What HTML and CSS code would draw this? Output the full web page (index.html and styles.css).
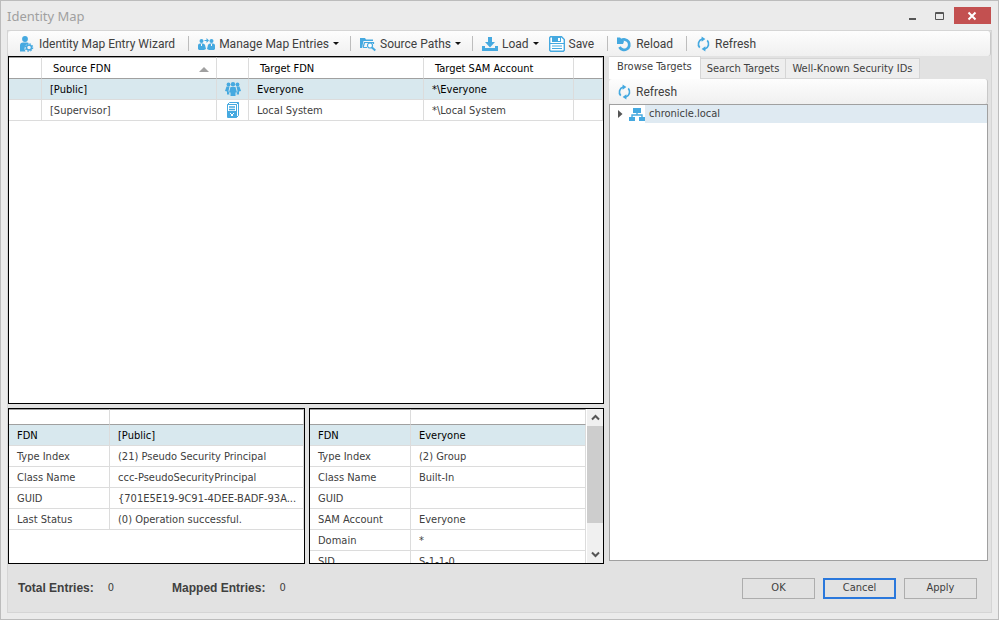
FILE: index.html
```html
<!DOCTYPE html>
<html lang="en">
<head>
  <meta charset="UTF-8">
  <meta name="viewport" content="width=device-width, initial-scale=1.0">
  <title>Identity Map</title>
  <link rel="stylesheet" href="styles.css">
</head>
<body>
  <!-- shared icons -->
  <svg class="defs" width="0" height="0">
    <symbol id="i-refresh" viewBox="0 0 16 16">
      <path d="M6.500 2.800A5.500 5.500 0 0 0 4 11.800M9.500 13.200A5.500 5.500 0 0 0 12 4.200" fill="none" stroke="#45a9e0" stroke-width="1.800"/>
      <path d="M6 0l4 2.700-4 3zM10 16l-4-2.700 4-3z" fill="#45a9e0"/>
    </symbol>
  </svg>

  <div class="window">
    <header class="titlebar">
      <h1>Identity Map</h1>
      <div class="window-buttons">
        <button class="win-btn" aria-label="Minimize"><svg width="10" height="10"><path d="M1 8h7" stroke="#555" stroke-width="2"/></svg></button>
        <button class="win-btn" aria-label="Maximize"><svg width="10" height="10"><path d="M.5 1.500h8v7h-8zM0 2.500h9" fill="none" stroke="#555"/></svg></button>
        <button class="win-btn close" aria-label="Close"><svg width="10" height="10"><path d="M1.500 1.500l7 7M8.500 1.500l-7 7" stroke="#fff" stroke-width="2"/></svg></button>
      </div>
    </header>

    <main class="client">
      <div class="toolbar">
        <button class="tool">
          <svg width="16" height="16" viewBox="0 0 16 16" fill="#45a9e0"><circle cx="6" cy="3" r="2.900"/><path d="M1 15.500V9.500Q1 6.500 4 6.500h4q1.500 0 2 1a5 5 0 0 0-3.500 8z"/><circle cx="10" cy="11.500" r="2.500" fill="none" stroke="#45a9e0" stroke-width="1.500"/><circle cx="10" cy="11.500" r="3.700" fill="none" stroke="#45a9e0" stroke-width="1.200" stroke-dasharray="1.500 1.400"/></svg>
          <span>Identity Map Entry Wizard</span>
        </button>
        <i class="sep"></i>
        <button class="tool">
          <svg width="17" height="16" viewBox="0 0 17 16" fill="#45a9e0"><circle cx="3.500" cy="5" r="2"/><circle cx="13.500" cy="5" r="2"/><path d="M0 13V9.500Q0 7.500 2 7.500h3q1.500 0 2 1.500l1 4-2 1H1zM17 13V9.500q0-2-2-2h-3q-1.500 0-2 1.500l-1 4 2 1h5z"/><path d="M6.500 4.500h3" stroke="#45a9e0"/><path d="M8.500 2L11 4.500 8.500 7z"/><path d="M3.500 8v2M13.500 8v2" stroke="#f7f7f7"/></svg>
          <span>Manage Map Entries</span><b class="caret"></b>
        </button>
        <i class="sep"></i>
        <button class="tool">
          <svg width="16" height="16" viewBox="0 0 16 16"><path d="M0 2h5l1 1.500h7V5H3.500L2 12H0z" fill="#45a9e0"/><path d="M3 11.500L4.500 6.500H13.500V8M3 11.500h4" fill="none" stroke="#45a9e0" stroke-width="1.200"/><circle cx="10" cy="9.500" r="2.500" fill="#fff" stroke="#45a9e0" stroke-width="1.200"/><path d="M12 11.500l3.300 3" stroke="#45a9e0" stroke-width="2"/></svg>
          <span>Source Paths</span><b class="caret"></b>
        </button>
        <i class="sep"></i>
        <button class="tool">
          <svg width="16" height="16" viewBox="0 0 16 16" fill="#45a9e0"><path d="M6 1h4v5h3l-5 5.500L3 6h3z"/><path d="M0 10h3v2h10v-2h3v5H0z"/></svg>
          <span>Load</span><b class="caret"></b>
        </button>
        <button class="tool save">
          <svg width="16" height="16" viewBox="0 0 16 16"><path d="M1.500.7H12.500l2.800 2.800v10.800l-1 1H1.700l-1-1V1.700z" fill="#fff" stroke="#45a9e0" stroke-width="1.400"/><path d="M3 1h9v5H3z" fill="#45a9e0"/><path d="M9 2h2v3H9z" fill="#fff"/><path d="M1 7.500h14M3 10h10M3 12.500h10" stroke="#45a9e0" stroke-width="1.200"/></svg>
          <span>Save</span>
        </button>
        <i class="sep"></i>
        <button class="tool">
          <svg width="15" height="16" viewBox="0 0 15 16"><path d="M4 4.500A5.200 5.200 0 1 1 2.500 11" fill="none" stroke="#45a9e0" stroke-width="2.800"/><path d="M0 1.500h3l4 4L6 8H0z" fill="#45a9e0"/></svg>
          <span>Reload</span>
        </button>
        <i class="sep"></i>
        <button class="tool">
          <svg width="15" height="16"><use href="#i-refresh"/></svg>
          <span>Refresh</span>
        </button>
      </div>

      <div class="panes">
        <section class="left">
          <div class="box entries">
            <table>
              <colgroup><col class="c-mark"><col class="c-name"><col class="c-icon"><col class="c-name"><col class="c-sam"><col></colgroup>
              <thead>
                <tr><th></th><th><div class="sorted">Source FDN<i class="sort"></i></div></th><th></th><th>Target FDN</th><th>Target SAM Account</th><th></th></tr>
              </thead>
              <tbody>
                <tr class="selected">
                  <td></td><td>[Public]</td>
                  <td class="icon"><svg width="16" height="14" viewBox="0 0 16 14" fill="#45a9e0"><circle cx="3.500" cy="2.500" r="1.900"/><circle cx="12.500" cy="2.500" r="1.900"/><circle cx="8" cy="2.200" r="2.200"/><path d="M1.500 4.500h3L3.500 9l1 3.500H2V9.500L0 9zM14.500 4.500h-3l1 4.500-1 3.500H14V9.500l2-.500zM5.500 5h5l1.500 5.500h-1.500V14h-5v-3.500H4z"/></svg></td>
                  <td>Everyone</td><td>*\Everyone</td><td></td>
                </tr>
                <tr>
                  <td></td><td>[Supervisor]</td>
                  <td class="icon"><svg width="12" height="16" viewBox="0 0 12 16"><path d="M.5 2.500L2.500.5h9v13l-2 2h-9z" fill="#fff" stroke="#45a9e0"/><path d="M9.500 2.500v13M.5 2.500h9l2-2" fill="none" stroke="#45a9e0"/><path d="M2 5h6M2 7.500h6" stroke="#45a9e0" stroke-width="1.400"/><path d="M1 9h8.500v6.500H1z" fill="#45a9e0"/><path d="M3 11h1v1H3zM6 11h1v1H6zM4 12h2v2H4z" fill="#fff"/></svg></td>
                  <td>Local System</td><td>*\Local System</td><td></td>
                </tr>
              </tbody>
            </table>
          </div>

          <div class="details">
            <div class="box">
              <table class="props">
                <colgroup><col class="c-key"><col></colgroup>
                <thead><tr><th></th><th></th></tr></thead>
                <tbody>
                  <tr class="selected"><td>FDN</td><td>[Public]</td></tr>
                  <tr><td>Type Index</td><td>(21) Pseudo Security Principal</td></tr>
                  <tr><td>Class Name</td><td>ccc-PseudoSecurityPrincipal</td></tr>
                  <tr><td>GUID</td><td>{701E5E19-9C91-4DEE-BADF-93A...</td></tr>
                  <tr><td>Last Status</td><td>(0) Operation successful.</td></tr>
                </tbody>
              </table>
            </div>
            <div class="box scrolled">
              <table class="props">
                <colgroup><col class="c-key"><col></colgroup>
                <thead><tr><th></th><th></th></tr></thead>
                <tbody>
                  <tr class="selected"><td>FDN</td><td>Everyone</td></tr>
                  <tr><td>Type Index</td><td>(2) Group</td></tr>
                  <tr><td>Class Name</td><td>Built-In</td></tr>
                  <tr><td>GUID</td><td></td></tr>
                  <tr><td>SAM Account</td><td>Everyone</td></tr>
                  <tr><td>Domain</td><td>*</td></tr>
                  <tr><td>SID</td><td>S-1-1-0</td></tr>
                </tbody>
              </table>
              <div class="scrollbar">
                <button aria-label="Scroll up"><svg width="9" height="7"><path d="M1 5.500L4.500 2 8 5.500" fill="none" stroke="#555" stroke-width="2"/></svg></button>
                <div class="track"><div class="thumb"></div></div>
                <button aria-label="Scroll down"><svg width="9" height="7"><path d="M1 1.500L4.500 5 8 1.500" fill="none" stroke="#555" stroke-width="2"/></svg></button>
              </div>
            </div>
          </div>
        </section>

        <section class="right">
          <div class="tabs" role="tablist">
            <button class="tab active" role="tab" aria-selected="true">Browse Targets</button>
            <button class="tab" role="tab">Search Targets</button>
            <button class="tab" role="tab">Well-Known Security IDs</button>
          </div>
          <div class="toolbar small">
            <button class="tool">
              <svg width="15" height="16"><use href="#i-refresh"/></svg>
              <span>Refresh</span>
            </button>
          </div>
          <div class="tree">
            <div class="node">
              <svg class="expander" width="5" height="8"><path d="M0 0l4.500 4L0 8z" fill="#555"/></svg>
              <svg width="16" height="13" viewBox="0 0 16 13"><path d="M4 0h8v5H4zM0 9h6v4H0zM10 9h6v4h-6z" fill="#45a9e0"/><path d="M8 5v2M3 9V7h10v2" fill="none" stroke="#45a9e0" stroke-width="1.400"/></svg>
              <span>chronicle.local</span>
            </div>
          </div>
        </section>
      </div>

      <footer class="status">
        <div class="count"><b>Total Entries:</b><span>0</span></div>
        <div class="count"><b>Mapped Entries:</b><span>0</span></div>
        <div class="actions">
          <button class="btn">OK</button>
          <button class="btn default">Cancel</button>
          <button class="btn">Apply</button>
        </div>
      </footer>
    </main>
  </div>
</body>
</html>
```
FILE: styles.css
```css
* {
  box-sizing: border-box;
  margin: 0;
  padding: 0;
}

body {
  height: 100vh;
  padding: 0 3px 2px 0;
  background: #fff;
  color: #404040;
  font: 11px/14px "DejaVu Sans Condensed", "DejaVu Sans", sans-serif;
}

button {
  border: none;
  background: none;
  color: inherit;
  font: inherit;
}

svg {
  display: block;
  flex: none;
}

.defs {
  position: absolute;
}

.window {
  height: 100%;
  display: flex;
  flex-direction: column;
  padding: 0 6px 6px;
  background: #ebebeb;
  border: 1px solid #bcbcbc;
}

/* title bar */
.titlebar {
  display: flex;
  justify-content: space-between;
  height: 29px;
  flex: none;
}

.titlebar h1 {
  font: 13px/30px "Noto Sans", sans-serif;
  color: #a0a0a0;
}

.window-buttons {
  display: flex;
  height: 17px;
  margin: 6px 1px 0 0;
}

.win-btn {
  width: 27px;
  padding-right: 2px;
  display: flex;
  align-items: center;
  justify-content: center;
}

.win-btn.close {
  width: 37px;
  background: #c35050;
}

/* toolbar */
.client {
  flex: 1;
  min-height: 0;
  display: flex;
  flex-direction: column;
  background: #e2e2e2;
  border: 1px solid #d5d5d5;
}

.toolbar {
  display: flex;
  align-items: center;
  flex: none;
  height: 25px;
  padding-left: 11px;
  background: linear-gradient(#fdfdfd, #f0f0f0);
  border-right: 1px solid #c8c8c8;
  border-radius: 3px;
}

.tool {
  display: flex;
  align-items: center;
  gap: 4px;
  font: 12px/16px Roboto, sans-serif;
  white-space: nowrap;
}

.sep {
  width: 1px;
  height: 15px;
  margin: 0 9px 0 13px;
  background: #bdbdbd;
}

.caret {
  margin-right: -2px;
  border: 3px solid transparent;
  border-top-color: #111;
  border-bottom: none;
}

.save {
  margin-left: 12px;
}

/* panes */
.panes {
  flex: 1;
  min-height: 0;
  display: grid;
  grid-template-columns: minmax(0, 596fr) minmax(0, 379fr);
  gap: 5px;
  padding-right: 3px;
}

.left {
  display: flex;
  flex-direction: column;
  gap: 4px;
  min-height: 0;
}

.box {
  min-width: 0;
  overflow: hidden;
  background: #fff;
  border: 1px solid #000;
}

.entries {
  flex: 1;
}

.details {
  display: grid;
  grid-template-columns: minmax(0, 297fr) minmax(0, 295fr);
  gap: 4px;
  height: 156px;
}

table {
  width: 100%;
  table-layout: fixed;
  border-collapse: separate;
  border-spacing: 0;
}

.c-mark { width: 33px; }
.c-name { width: 175px; }
.c-icon { width: 32px; }
.c-sam { width: 150px; }
.c-key { width: 101px; }

th, td {
  height: 21px;
  padding: 2px 0 0 8px;
  border-right: 1px solid #dcdcdc;
  border-bottom: 1px solid #dcdcdc;
  text-align: left;
  white-space: nowrap;
  overflow: hidden;
}

th {
  height: 22px;
  padding: 2px 7px 0 11px;
  border-top: 1px solid #a0a0a0;
  border-bottom-color: #a0a0a0;
  color: #000;
  font-weight: normal;
}

.props th {
  height: 16px;
  padding: 0;
}

.sorted {
  display: flex;
  align-items: center;
  justify-content: space-between;
}

.sort {
  border: 5px solid transparent;
  border-bottom-color: #a0a0a0;
  border-top: none;
}

.selected td {
  background: #d8e8ee;
  color: #000;
}

td.icon {
  padding: 0;
}

.icon svg {
  margin: 0 auto;
}

.scrolled {
  display: flex;
  align-items: flex-start;
}

.scrolled table {
  flex: 1;
  min-width: 0;
}

.scrollbar {
  display: flex;
  flex-direction: column;
  width: 16px;
  height: 100%;
  margin-left: 1px;
  background: #f0f0f0;
}

.scrollbar button {
  display: flex;
  align-items: center;
  justify-content: center;
  height: 17px;
}

.track {
  flex: 1;
}

.thumb {
  height: 81%;
  background: #cdcdcd;
}

/* targets */
.right {
  display: flex;
  flex-direction: column;
  min-height: 0;
  padding-bottom: 3px;
}

.tabs {
  display: flex;
  align-items: flex-end;
  height: 23px;
}

.tab {
  height: 21px;
  padding: 1px 6px 0;
  background: #eee;
  border: 1px solid #d5d5d5;
  border-left: none;
  white-space: nowrap;
}

.tab.active {
  height: 23px;
  padding: 0 8px 2px;
  background: #fff;
  border-bottom: none;
}

.toolbar.small {
  padding-left: 8px;
}

.tree {
  flex: 1;
  background: #fff;
  border: 1px solid #a0a0a0;
}

.node {
  display: flex;
  align-items: center;
  height: 18px;
}

.expander {
  margin: 0 6px 0 8px;
}

.node span {
  flex: 1;
  padding-left: 4px;
  background: #dfeaf2;
  line-height: 18px;
}

/* status bar */
.status {
  display: flex;
  align-items: center;
  flex: none;
  height: 48px;
  padding: 0 14px 0 10px;
}

.count {
  display: flex;
  gap: 14px;
  margin-right: 58px;
}

.count b {
  font: bold 12px/16px "Liberation Sans", sans-serif;
}

.count span {
  line-height: 16px;
}

.actions {
  display: flex;
  gap: 8px;
  margin-left: auto;
}

.btn {
  width: 73px;
  height: 21px;
  border: 1px solid #adadad;
}

.btn.default {
  border: 2px solid #2a78dc;
}
```
